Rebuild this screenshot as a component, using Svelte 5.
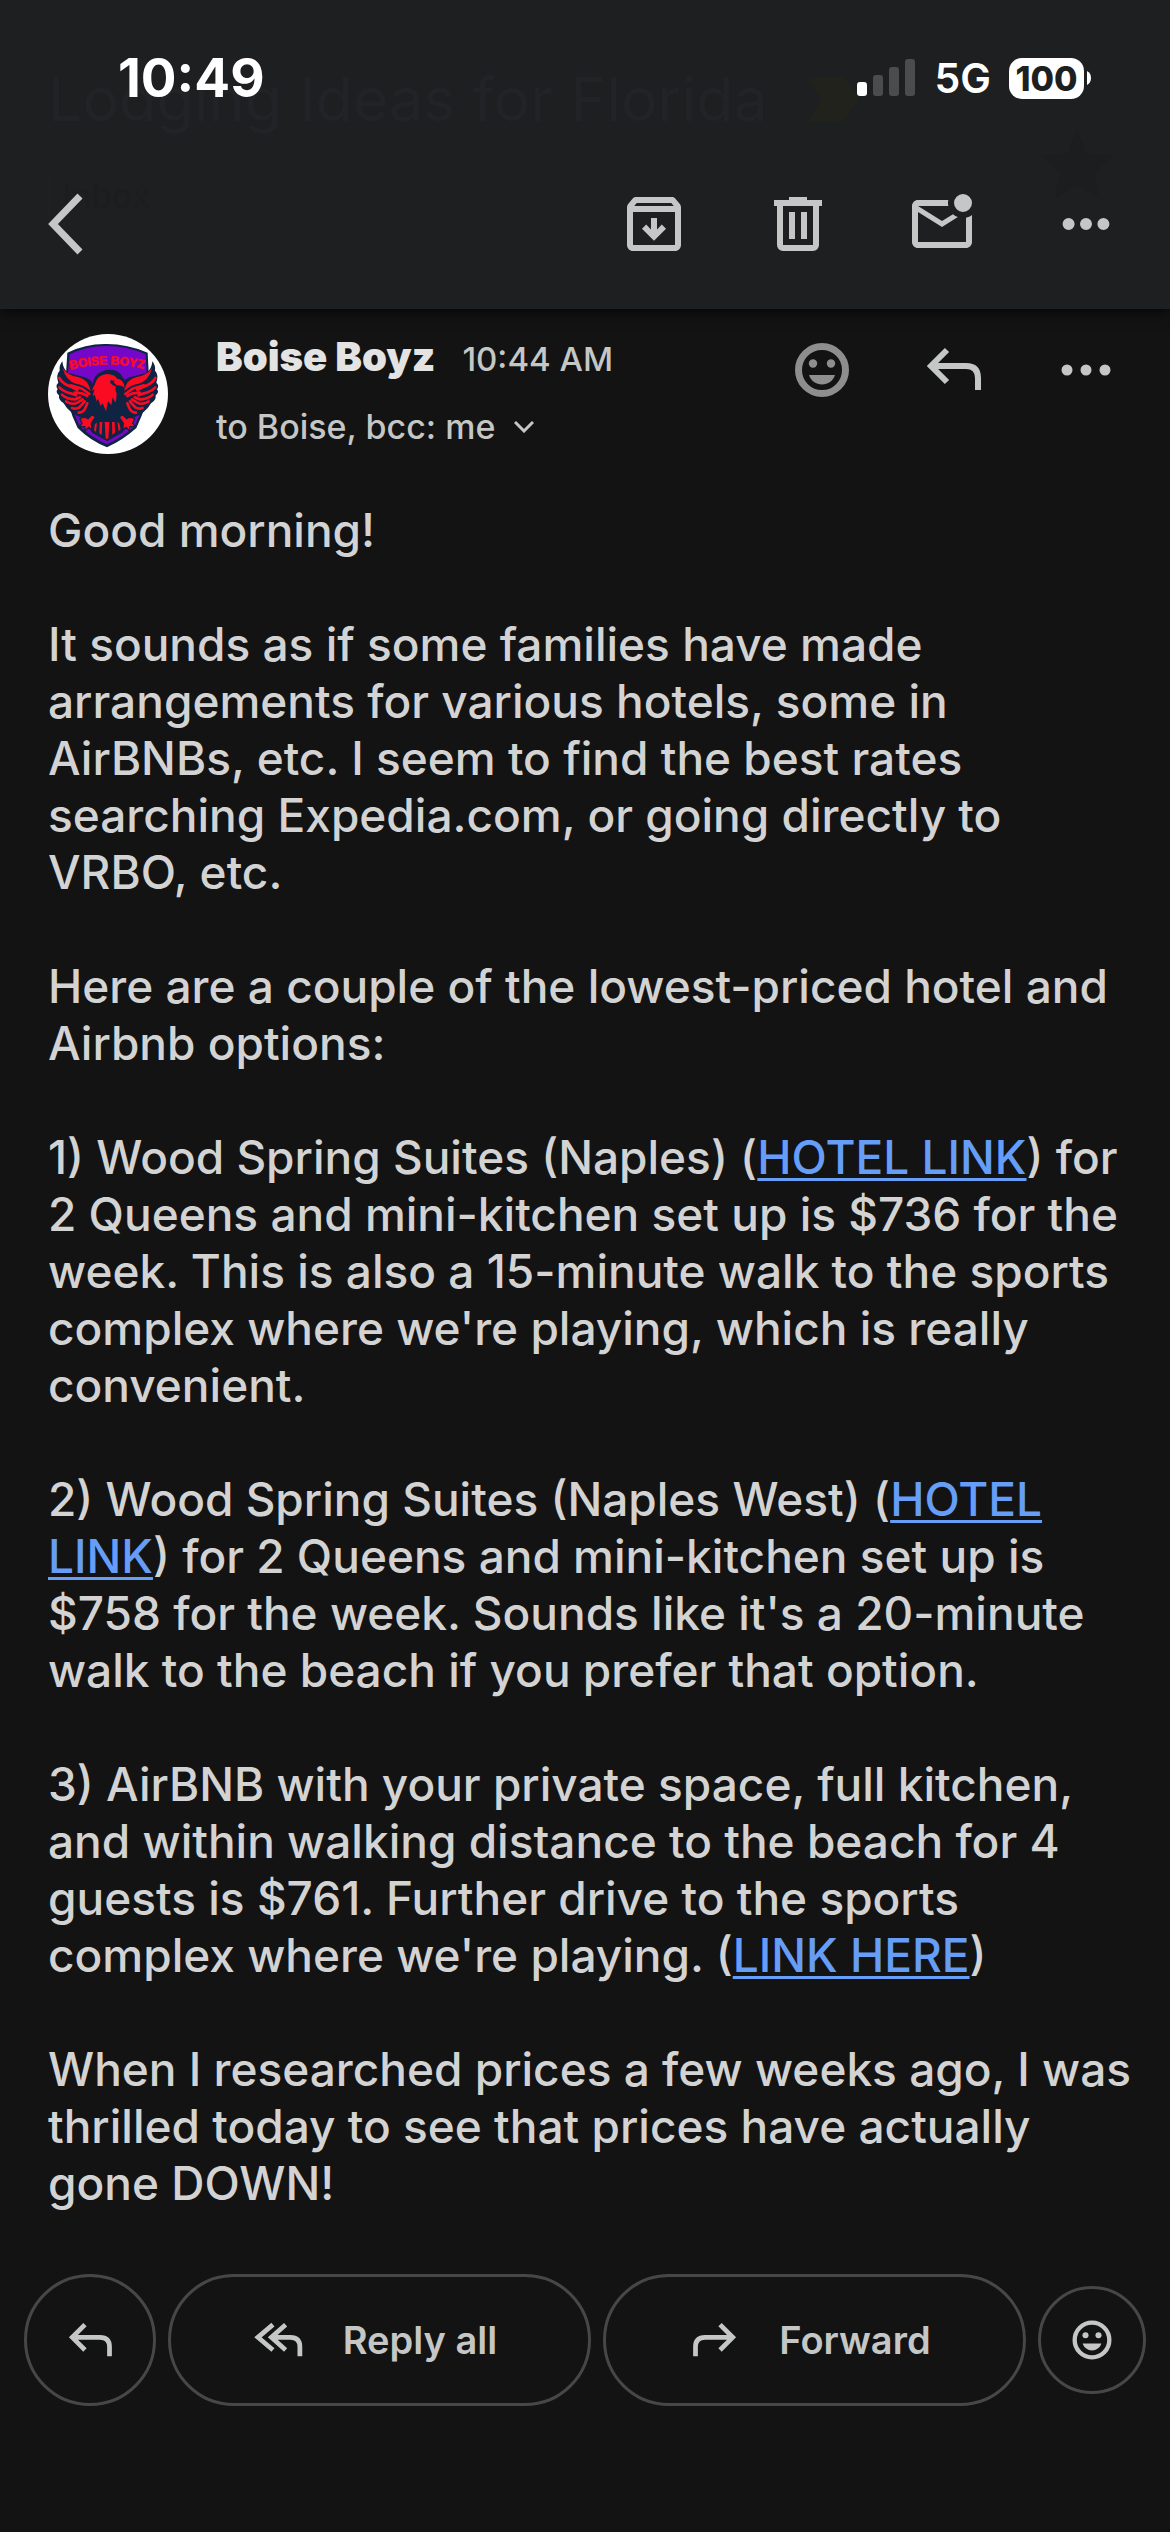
<script>
  const toolbar = [
    {
      label: 'Archive',
      d: 'M20.54 5.23l-1.39-1.68C18.88 3.21 18.47 3 18 3H6c-.47 0-.88.21-1.16.55L3.46 5.23C3.17 5.57 3 6.02 3 6.5V19c0 1.1.9 2 2 2h14c1.1 0 2-.9 2-2V6.500c0-.48-.17-.93-.46-1.270zM6.240 5h11.520l.830 1H5.420zM5 19V8h14v11zM11 10h2v3.800l1.600-1.600L16 13.600l-4 4-4-4 1.400-1.400 1.600 1.600z'
    },
    {
      label: 'Delete',
      d: 'M15 4V3H9v1H4v2h1v13a2 2 0 0 0 2 2h10a2 2 0 0 0 2-2V6h1V4zM17 19H7V6h10zM9 8h2v9H9zM13 8h2v9h-2z'
    },
    {
      label: 'Mark as unread',
      d: 'M22 8.98V18c0 1.1-.9 2-2 2H4c-1.1 0-2-.9-2-2V6c0-1.1.9-2 2-2h10.1c-.06.32-.1.66-.1 1 0 .34.04.68.1 1H4l8 5 3.67-2.29c.47.43 1.02.76 1.63.98L12 13 4 8v10h16V9.9c.74-.15 1.42-.48 2-.92zM16 5a3 3 0 1 0 6 0 3 3 0 1 0-6 0z'
    },
    {
      label: 'More options',
      d: 'M4.200 12a2 2 0 1 0 4 0 2 2 0 1 0-4 0zM10 12a2 2 0 1 0 4 0 2 2 0 1 0-4 0zM15.800 12a2 2 0 1 0 4 0 2 2 0 1 0-4 0z'
    }
  ];
</script>

{#snippet smile(ring)}
  <svg viewBox="0 0 72 72" aria-hidden="true">
    <circle cx="36" cy="36" r={27 - ring / 2} fill="none" stroke="currentColor" stroke-width={ring} />
    <circle cx="27" cy="29.500" r="4.200" fill="currentColor" />
    <circle cx="45" cy="29.500" r="4.200" fill="currentColor" />
    <path d="M23 41h26c-2 6-7 9.500-13 9.500S25 47 23 41z" fill="currentColor" />
  </svg>
{/snippet}

{#snippet reply()}
  <svg viewBox="0 0 72 72" aria-hidden="true">
    <path d="M29 16 13 32l16 16M13 32h35q12 0 12 12v12" fill="none" stroke="currentColor" stroke-width="6" />
  </svg>
{/snippet}

<div class="screen">
  <header class="top">
    <div class="ghost" aria-hidden="true">
      <div class="subject">
        <span>Lodging Ideas for Florida</span>
        <svg class="marker" viewBox="0 0 51 44"><path d="M0 0h36l15 22-15 22H0l14-22z" /></svg>
      </div>
      <span class="inbox">Inbox</span>
      <svg class="star" viewBox="0 0 72 68"><path d="m36 0 10 24 26 2-19 17 5 25-22-13-22 13 5-25L0 26l26-2z" /></svg>
    </div>

    <div class="status">
      <span class="clock">10:49</span>
      <div class="radio">
        <svg class="signal" viewBox="0 0 58 38" aria-label="Signal, one bar">
          <rect x="0" y="23" width="10" height="14" rx="3" fill="#fff" />
          <rect x="16" y="16" width="10" height="21" rx="3" />
          <rect x="32" y="8" width="10" height="29" rx="3" />
          <rect x="48" y="0" width="10" height="37" rx="3" />
        </svg>
        <span class="network">5G</span>
        <div class="battery">
          <span class="level">100</span>
          <svg class="nub" viewBox="0 0 4 14"><path d="M0 0q4 2 4 7t-4 7z" /></svg>
        </div>
      </div>
    </div>

    <nav class="toolbar">
      <button class="back" aria-label="Back">
        <svg viewBox="0 0 36 62"><path d="M32 3 5 31l27 28" /></svg>
      </button>
      {#each toolbar as item}
        <button class="icon" aria-label={item.label}>
          <svg viewBox="0 0 24 24"><path d={item.d} fill="currentColor" fill-rule="evenodd" /></svg>
        </button>
      {/each}
    </nav>
  </header>

  <main>
    <section class="sender">
      <svg class="avatar" viewBox="54 42 360 360" role="img" aria-label="Boise Boyz">
        <circle cx="234" cy="222" r="180" fill="#fff" />
        <path d="M112 98Q170 70 231 72q61 0 122 26l4 80q0 70-38 146-40 36-88 58-50-20-88-58-36-70-36-146z" fill="#0f2342" />
        <path d="M119 103Q172 77 231 78q60 0 116 25l4 76q-2 70-37 139-36 34-83 55-46-20-82-55-36-70-37-139z" fill="#7508c8" />
        <path id="crest-arc" d="M121 149Q232 119 350 149" fill="none" />
        <text class="crest"><textPath href="#crest-arc">BOISE BOYZ</textPath></text>
        <g id="wing">
          <path d="M97 124q2 22 16 34l52 14q28 8 30 44l14 8-2 70-44 2q-44-12-62-46-16-10-14-24-12-10-4-18-8-12 2-20-8-24 4-36-2-16 8-28z" fill="#0f2342" />
          <path
            d="M98 145q16 22 46 26 30 6 38 42-22-20-44-22-30-8-40-46z"
            fill="#fb0b22"
          />
          <path
            d="M88 174q10 18 34 26l20 10M88 202q14 14 34 18l16 6M96 224q16 14 40 14l14-6M108 244q20 12 34 4l16-10M126 264q18 6 28-8l10-12M146 278q14 0 20-14l6-14M122 196l34 10 22 16M134 218l22 2 16 8"
            fill="none" stroke="#fb0b22" stroke-width="8" stroke-linecap="round"
          />
        </g>
        <use href="#wing" transform="matrix(-1 0 0 1 464 0)" />
        <path d="M190 182q6-24 38-32 38-6 50 22 12 8 8 32l-14-4q0 16 8 34l-8 34q22 20 22 50l-18 20-44 26-46-26-14-22q0-26 20-48l-12-30q6-26 10-56z" fill="#0f2342" />
        <path d="M194 194q8-30 36-32 26 0 34 18-16-2-24 8 10 10 18 12-4 8 2 20 0 18-4 28l-8-16-4 24-10-12-6 30-10-24-6 8-8-22-4 8-6-20-6 4q4-16 6-20l-8 4q2-8 8-18zM258 176q24 0 26 28-8-10-24-8l-10-10z" fill="#fb0b22" />
        <path d="m240 180 14 4-10 5z" fill="#0f2342" />
        <path d="m224 306 14 0-3 50-8 0zM209 306l8 0-2 40-7-6zM246 306l8 0 1 32-8 6zM195 312l6-4-3 28-6-6zM262 306l6 4 4 18-6 6z" fill="#fb0b22" />
        <g fill="#fb0b22" stroke="#0f2342" stroke-width="4">
          <path d="M150 296q14-8 24 0l14-14 8 10-12 18 2 20-10-8-10 10-2-12-16 0 8-10z" />
          <path d="M314 296q-14-8-24 0l-14-14-8 10 12 18-2 20 10-8 10 10 2-12 16 0-8-10z" />
        </g>
      </svg>
      <div class="who">
        <div class="line">
          <strong>Boise Boyz</strong>
          <time>10:44 AM</time>
        </div>
        <button class="to">
          to Boise, bcc: me
          <svg viewBox="0 0 20 12"><path d="m1 1 9 9 9-9" /></svg>
        </button>
      </div>
      <div class="actions">
        <button class="icon dim" aria-label="Add reaction">{@render smile(7)}</button>
        <button class="icon" aria-label="Reply">{@render reply()}</button>
        <button class="icon" aria-label="More">
          <svg viewBox="0 0 72 72"><g fill="currentColor"><circle cx="17" cy="36" r="5.500" /><circle cx="36" cy="36" r="5.500" /><circle cx="55" cy="36" r="5.500" /></g></svg>
        </button>
      </div>
    </section>

    <article>
      <p>Good morning!</p>
      <p>It sounds as if some families have made<br />arrangements for various hotels, some in<br />AirBNBs, etc. I seem to find the best rates<br />searching Expedia.com, or going directly to<br />VRBO, etc.</p>
      <p>Here are a couple of the lowest-priced hotel and<br />Airbnb options:</p>
      <p>1) Wood Spring Suites (Naples) (<a href="#hotel-naples">HOTEL LINK</a>) for<br />2 Queens and mini-kitchen set up is $736 for the<br />week. This is also a 15-minute walk to the sports<br />complex where we're playing, which is really<br />convenient.</p>
      <p>2) Wood Spring Suites (Naples West) (<a href="#hotel-naples-west">HOTEL<br />LINK</a>) for 2 Queens and mini-kitchen set up is<br />$758 for the week. Sounds like it's a 20-minute<br />walk to the beach if you prefer that option.</p>
      <p>3) AirBNB with your private space, full kitchen,<br />and within walking distance to the beach for 4<br />guests is $761. Further drive to the sports<br />complex where we're playing. (<a href="#airbnb">LINK HERE</a>)</p>
      <p>When I researched prices a few weeks ago, I was<br />thrilled today to see that prices have actually<br />gone DOWN!</p>
    </article>
  </main>

  <footer>
    <button class="pill round" aria-label="Reply">{@render reply()}</button>
    <button class="pill wide">
      <svg viewBox="0 0 72 72" aria-hidden="true">
        <path d="M29 16 10 32l19 16M45 16 27 32l18 16M27 32h24q12 0 12 12v12" fill="none" stroke="currentColor" stroke-width="6" />
      </svg>
      Reply all
    </button>
    <button class="pill wide">
      <svg viewBox="0 0 72 72" aria-hidden="true">
        <path d="m43 16 16 16-16 16M59 32H24q-12 0-12 12v12" fill="none" stroke="currentColor" stroke-width="6" />
      </svg>
      Forward
    </button>
    <button class="pill small" aria-label="Add reaction">{@render smile(6)}</button>
  </footer>
</div>

<style>
  :global(body) {
    background: #131313;
  }
  .screen {
    min-height: 100vh;
    box-sizing: border-box;
    background: #131313;
    color: #d3d3d3;
    font-family: Inter, 'Liberation Sans', sans-serif;
  }
  button {
    margin: 0;
    padding: 0;
    border: 0;
    background: none;
    color: #c4c7c5;
    font: inherit;
  }
  svg {
    display: block;
    flex: none;
  }
  .top {
    position: relative;
    padding: 48px 48px 35px;
    background: #1e1f21;
    box-shadow: 0 2px 14px rgba(0, 0, 0, 0.8);
  }
  .ghost {
    position: absolute;
    inset: 0;
    padding: 60px 48px 0;
    color: #222326;
    fill: #222326;
  }
  .subject {
    display: flex;
    align-items: center;
    gap: 40px;
    height: 78px;
    font-size: 61px;
    white-space: nowrap;
  }
  .marker {
    width: 51px;
    fill: #22221c;
  }
  .inbox {
    display: inline-block;
    margin-top: 29px;
    padding: 0 12px;
    border: 2px solid #1f2022;
    border-radius: 10px;
    color: #1c1d1f;
    font-size: 34px;
    line-height: 54px;
  }
  .star {
    position: absolute;
    top: 130px;
    right: 57px;
    width: 72px;
    fill: #1c1d1f;
  }
  .status {
    position: relative;
    display: flex;
    align-items: center;
    justify-content: space-between;
    height: 60px;
    padding: 0 31px 0 70px;
    color: #fff;
    font-weight: 700;
  }
  .clock {
    font-size: 53px;
  }
  .radio {
    display: flex;
    align-items: center;
  }
  .signal {
    width: 58px;
    fill: #4b4c4d;
  }
  .network {
    margin: 0 18px 0 20px;
    font-size: 41px;
    font-weight: 600;
  }
  .battery {
    display: flex;
    align-items: center;
    gap: 3px;
  }
  .level {
    width: 75px;
    border-radius: 13px;
    background: #fff;
    color: #1e1f21;
    font-size: 34px;
    font-weight: 800;
    line-height: 41px;
    text-align: center;
  }
  .nub {
    width: 4px;
    fill: #fff;
  }
  .toolbar {
    position: relative;
    display: flex;
    align-items: center;
    gap: 72px;
    height: 100px;
    margin-top: 66px;
  }
  .back {
    margin-right: auto;
  }
  .back svg {
    width: 36px;
    fill: none;
    stroke: currentColor;
    stroke-width: 7;
  }
  .icon svg {
    width: 72px;
  }
  .dim {
    color: #8e8e8e;
  }
  .sender {
    display: flex;
    gap: 48px;
    padding: 25px 48px 0;
  }
  .avatar {
    width: 120px;
    height: 120px;
  }
  .crest {
    fill: #fb0b22;
    stroke: #fb0b22;
    stroke-width: 2;
    font-family: 'Liberation Sans', sans-serif;
    font-size: 36px;
    font-weight: 700;
  }
  .who {
    flex: 1;
  }
  .line {
    display: flex;
    align-items: baseline;
    gap: 27px;
    height: 46px;
    line-height: 46px;
    white-space: nowrap;
  }
  strong {
    color: #e3e3e3;
    font-size: 40px;
    font-weight: 900;
  }
  time {
    color: #c4c7c5;
    font-size: 33px;
    font-weight: 500;
  }
  .to {
    display: flex;
    align-items: center;
    gap: 19px;
    margin-top: 24px;
    font-size: 34px;
    font-weight: 500;
    line-height: 46px;
    white-space: nowrap;
  }
  .to svg {
    width: 20px;
    fill: none;
    stroke: currentColor;
    stroke-width: 3;
  }
  .actions {
    display: flex;
    align-items: flex-start;
    gap: 60px;
  }
  article {
    display: flex;
    flex-direction: column;
    gap: 57px;
    padding: 48px 24px 62px 48px;
    font-size: 46px;
    font-weight: 500;
    line-height: 57px;
  }
  p {
    margin: 0;
  }
  a {
    color: #669df6;
    text-decoration-thickness: 3px;
    text-underline-offset: 4px;
  }
  footer {
    display: flex;
    align-items: center;
    gap: 12px;
    padding: 0 24px;
  }
  .pill {
    display: flex;
    align-items: center;
    justify-content: center;
    box-sizing: border-box;
    height: 132px;
    border: 3px solid #474747;
    border-radius: 66px;
  }
  .pill svg {
    width: 57px;
  }
  .round {
    width: 132px;
  }
  .wide {
    flex: 1;
    gap: 36px;
    padding-right: 12px;
    font-size: 38px;
    font-weight: 600;
    white-space: nowrap;
  }
  .small {
    width: 108px;
    height: 108px;
  }
  .small svg {
    width: 52px;
  }
</style>
